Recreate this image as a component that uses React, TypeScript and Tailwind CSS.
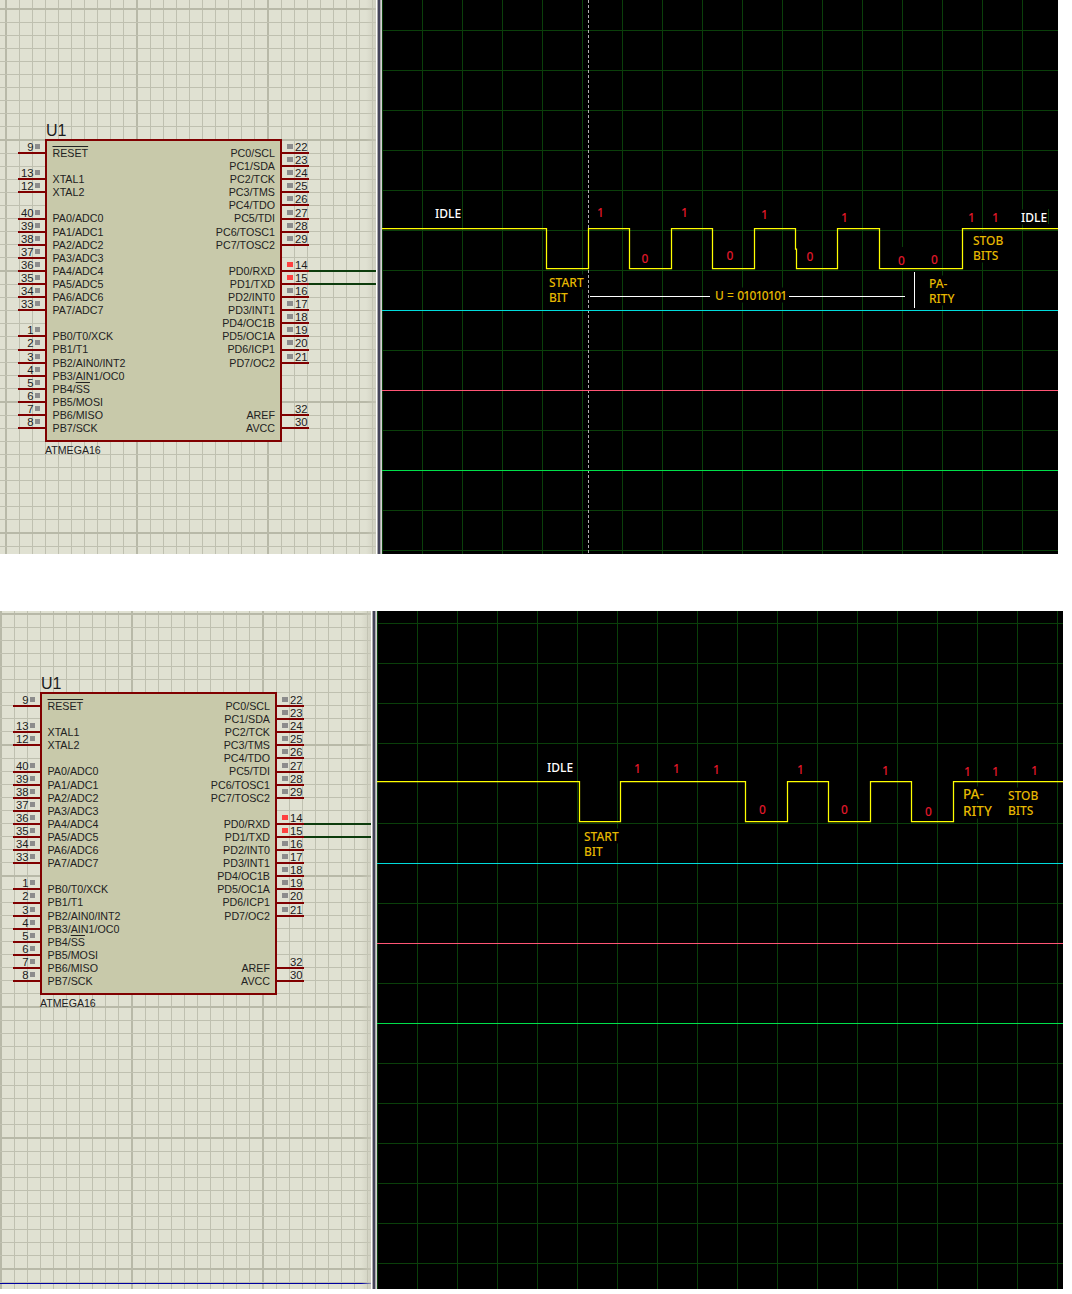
const PIN_ROWS = 22

// row index -> pin number / label on each side of the chip
const leftPins: Record<number, string> = {
  0: '9', 2: '13', 3: '12', 5: '40', 6: '39', 7: '38', 8: '37', 9: '36', 10: '35', 11: '34', 12: '33',
  14: '1', 15: '2', 16: '3', 17: '4', 18: '5', 19: '6', 20: '7', 21: '8',
}
const rightPins: Record<number, string> = {
  0: '22', 1: '23', 2: '24', 3: '25', 4: '26', 5: '27', 6: '28', 7: '29',
  9: '14', 10: '15', 11: '16', 12: '17', 13: '18', 14: '19', 15: '20', 16: '21',
  20: '32', 21: '30',
}
const leftLabels: Record<number, string> = {
  2: 'XTAL1', 3: 'XTAL2', 5: 'PA0/ADC0', 6: 'PA1/ADC1', 7: 'PA2/ADC2', 8: 'PA3/ADC3', 9: 'PA4/ADC4',
  10: 'PA5/ADC5', 11: 'PA6/ADC6', 12: 'PA7/ADC7', 14: 'PB0/T0/XCK', 15: 'PB1/T1', 16: 'PB2/AIN0/INT2',
  17: 'PB3/AIN1/OC0', 19: 'PB5/MOSI', 20: 'PB6/MISO', 21: 'PB7/SCK',
}
const rightLabels: Record<number, string> = {
  0: 'PC0/SCL', 1: 'PC1/SDA', 2: 'PC2/TCK', 3: 'PC3/TMS', 4: 'PC4/TDO', 5: 'PC5/TDI', 6: 'PC6/TOSC1', 7: 'PC7/TOSC2',
  9: 'PD0/RXD', 10: 'PD1/TXD', 11: 'PD2/INT0', 12: 'PD3/INT1', 13: 'PD4/OC1B', 14: 'PD5/OC1A', 15: 'PD6/ICP1', 16: 'PD7/OC2',
  20: 'AREF', 21: 'AVCC',
}

const rows = Array.from({ length: PIN_ROWS }, (_, i) => i)

function LeftPinColumn() {
  return (
    <div className="w-[27px] mt-[2px] flex flex-col">
      {rows.map((i) =>
        leftPins[i] ? (
          <div key={i} className="h-[13.1px] border-b-2 border-[#800000] flex items-center justify-end pr-[5px] gap-[1.5px] text-[11.3px] leading-[11px] text-[#1c1c1c]">
            <span className="mt-[2px]">{leftPins[i]}</span>
            <span className="w-[5px] h-[5px] bg-[#8c8c8c]" />
          </div>
        ) : (
          <div key={i} className="h-[13.1px]" />
        ),
      )}
    </div>
  )
}

function RightPinColumn() {
  return (
    <div className="w-[27px] mt-[2px] flex flex-col">
      {rows.map((i) =>
        rightPins[i] ? (
          <div key={i} className="relative h-[13.1px] border-b-2 border-[#800000] flex items-center pl-[5px] gap-[2px] text-[11.3px] leading-[11px] text-[#1c1c1c]">
            <span
              className={
                i === 9 || i === 10
                  ? 'w-[6px] h-[5px] bg-[#ff4040]'
                  : i >= 20
                    ? 'w-[6px] h-[5px]'
                    : 'w-[6px] h-[5px] bg-[#8c8c8c]'
              }
            />
            <span className="mt-[2px]">{rightPins[i]}</span>
            {(i === 9 || i === 10) && (
              <span className="absolute left-full bottom-[-2px] w-[68px] h-[2px] bg-[#0c3c0c]" />
            )}
          </div>
        ) : (
          <div key={i} className="h-[13.1px]" />
        ),
      )}
    </div>
  )
}

function Chip({ left, top }: { left: number; top: number }) {
  return (
    <div className="absolute" style={{ left, top }}>
      <div className="absolute left-[28px] top-[-17px] text-[16px] leading-[18px] text-[#1c1c1c]">U1</div>
      <div className="flex items-start">
        <LeftPinColumn />
        <div className="w-[237px] h-[303px] border-2 border-[#800000] bg-[#c8c9aa] flex justify-between pl-[5.5px] pr-[5px] pt-[6px] text-[10.7px] text-[#222]">
          <div className="flex flex-col">
            {rows.map((i) => (
              <div key={i} className="h-[13.1px] leading-[13.1px] whitespace-nowrap">
                {i === 0 ? (
                  <span className="overline">RESET</span>
                ) : i === 18 ? (
                  <>
                    PB4/<span className="overline">SS</span>
                  </>
                ) : (
                  leftLabels[i]
                )}
              </div>
            ))}
          </div>
          <div className="flex flex-col items-end">
            {rows.map((i) => (
              <div key={i} className="h-[13.1px] leading-[13.1px] whitespace-nowrap">
                {rightLabels[i]}
              </div>
            ))}
          </div>
        </div>
        <RightPinColumn />
      </div>
      <div className="absolute left-[27px] top-[305px] text-[10.6px] leading-[13px] text-[#222]">ATMEGA16</div>
    </div>
  )
}

type SchematicProps = {
  width: number
  height: number
  gridX: number
  gridY: number
  chipLeft: number
  chipTop: number
  blueLine?: number
}

function Schematic({ width, height, gridX, gridY, chipLeft, chipTop, blueLine }: SchematicProps) {
  const vLines = Array.from({ length: 40 }, (_, i) => i)
  const hLines = Array.from({ length: 60 }, (_, i) => i)
  return (
    <div className="relative shrink-0 overflow-hidden bg-[#e0e1d2]" style={{ width, height }}>
      <svg className="absolute inset-0" width={width} height={height} shapeRendering="crispEdges">
        {vLines.map((i) => {
          const x = gridX + i * 13.1
          return <line key={i} x1={x} x2={x} y1={0} y2={height} stroke={i % 10 === 0 ? '#b8b9a8' : '#bfc0b0'} strokeWidth={i % 10 === 0 ? 2 : 1} />
        })}
        {hLines.map((i) => {
          const y = gridY + i * 13.1
          return <line key={i} x1={0} x2={width} y1={y} y2={y} stroke={i % 10 === 0 ? '#b8b9a8' : '#bfc0b0'} strokeWidth={i % 10 === 0 ? 2 : 1} />
        })}
        {blueLine !== undefined && <line x1={0} x2={width} y1={blueLine} y2={blueLine} stroke="#0000a0" strokeWidth={1} />}
      </svg>
      <div className="absolute right-0 top-0 bottom-0 w-[10px] bg-gradient-to-r from-transparent to-[#c8c8b8]/70" />
      <Chip left={chipLeft} top={chipTop} />
    </div>
  )
}

function Divider() {
  return (
    <div className="w-[6px] shrink-0 self-stretch flex">
      <div className="w-px bg-white" />
      <div className="w-px bg-[#a8a8a8]" />
      <div className="w-[2px] bg-[#44445a]" />
      <div className="w-px bg-[#a8a8a8]" />
      <div className="w-px bg-[#d4d4d4]" />
    </div>
  )
}

type Tone = 'white' | 'gold' | 'goldTight' | 'goldLarge' | 'red'
type Word = { text: string; x: number; cy: number; tone: Tone }

const tones: Record<Tone, string> = {
  white: 'text-[12px] font-medium text-white bg-black',
  gold: 'text-[12px] font-medium text-[#e6b800] bg-black',
  goldTight: 'text-[12px] font-medium tracking-[-0.7px] [word-spacing:1.5px] text-[#e6b800] bg-black',
  goldLarge: 'text-[13.5px] font-medium text-[#e6b800] bg-black',
  red: 'text-[12px] font-medium text-[#e0182a] -translate-x-1/2',
}

function ScopeText({ word, x0, y0 }: { word: Word; x0: number; y0: number }) {
  return (
    <span
      className={`absolute -translate-y-1/2 whitespace-nowrap leading-[15px] font-['Noto_Sans',sans-serif] ${tones[word.tone]}`}
      style={{ left: word.x - x0, top: word.cy - y0 }}
    >
      {word.text}
    </span>
  )
}

const red = (x: number, cy: number, text: string): Word => ({ text, x, cy, tone: 'red' })
const gold = (x: number, cy: number, text: string, tone: Tone = 'gold'): Word => ({ text, x, cy, tone })
const white = (x: number, cy: number, text: string): Word => ({ text, x, cy, tone: 'white' })

const topWords: Word[] = [
  white(435, 213, 'IDLE'), white(1021, 217, 'IDLE'),
  red(600.5, 212, '1'), red(645, 258, '0'), red(684.5, 212, '1'), red(730, 255, '0'), red(764.5, 214, '1'),
  red(810, 256, '0'), red(844.5, 217, '1'), red(901.5, 260, '0'), red(934.5, 259, '0'), red(971.5, 217, '1'), red(995.5, 217, '1'),
  gold(973, 239.5, 'STOB'), gold(973, 254.5, 'BITS'), gold(549, 281.5, 'START'), gold(549, 296.5, 'BIT'),
  gold(715, 295, 'U = 01010101', 'goldTight'), gold(929, 282.5, 'PA-'), gold(929, 297.5, 'RITY'),
]

const bottomWords: Word[] = [
  white(547, 767, 'IDLE'),
  red(637.5, 768, '1'), red(676.5, 768, '1'), red(716.5, 769, '1'), red(762.5, 809, '0'), red(800.5, 769, '1'),
  red(844.5, 809, '0'), red(885.5, 770, '1'), red(928.5, 811, '0'), red(967.5, 771, '1'), red(995.5, 771, '1'), red(1034.5, 770, '1'),
  gold(963, 793.5, 'PA-', 'goldLarge'), gold(963, 810.5, 'RITY', 'goldLarge'), gold(1008, 794.5, 'STOB'), gold(1008, 809.5, 'BITS'),
  gold(584, 835.5, 'START'), gold(584, 850.5, 'BIT'),
]

type ScopeProps = {
  x0: number
  y0: number
  width: number
  height: number
  gridYs: number[]
  wave: string
  traces: number[]
  words: Word[]
  children?: React.ReactNode
}

function Scope({ x0, y0, width, height, gridYs, wave, traces, words, children }: ScopeProps) {
  const gridXs = Array.from({ length: 18 }, (_, i) => x0 + i * 40 + 0.5).filter((x) => x < x0 + width)
  const traceColors = ['#00dcdc', '#ff5575', '#00e04a']
  return (
    <div className="relative shrink-0 overflow-hidden bg-black" style={{ width, height }}>
      <svg className="absolute inset-0" width={width} height={height} viewBox={`${x0} ${y0} ${width} ${height}`}>
        {gridXs.map((x) => (
          <line key={x} x1={x} x2={x} y1={y0} y2={y0 + height} stroke="#0a3f0a" />
        ))}
        {gridYs.map((y) => (
          <line key={y} x1={x0} x2={x0 + width} y1={y + 0.5} y2={y + 0.5} stroke="#0a3f0a" />
        ))}
        {children}
        {traces.map((y, i) => (
          <line key={y} x1={x0} x2={x0 + width} y1={y + 0.5} y2={y + 0.5} stroke={traceColors[i]} />
        ))}
        <path d={wave} fill="none" stroke="#ffff00" strokeWidth={1.25} />
      </svg>
      {words.map((w) => (
        <ScopeText key={`${w.text}-${w.x}-${w.cy}`} word={w} x0={x0} y0={y0} />
      ))}
    </div>
  )
}

const topWave =
  'M382 228.5H546.5V268.5H588.5V228.5H629.5V268.5H671.5V228.5H712.5V268.5H754.5V228.5H795.5V249H796.5V268.5H837.5V228.5H879.5V268.5H962.5V228.5H1058'
const bottomWave =
  'M377 781.5H579.5V821.5H620.5V781.5H745.5V821.5H787.5V781.5H828.5V821.5H870.5V781.5H911.5V821.5H953.5V781.5H1063'

const topGrid = Array.from({ length: 14 }, (_, i) => 30 + i * 40)
const bottomGrid = Array.from({ length: 17 }, (_, i) => 623 + i * 40).filter((y) => y !== 783)

export default function App() {
  return (
    <div className="w-[1072px] h-[1294px] bg-white flex flex-col font-['Liberation_Sans',Arial,sans-serif]">
      <div className="flex h-[554px]">
        <Schematic width={376} height={554} gridX={6} gridY={9} chipLeft={18} chipTop={139} />
        <Divider />
        <Scope x0={382} y0={0} width={676} height={554} gridYs={topGrid} wave={topWave} traces={[310, 390, 470]} words={topWords}>
          <rect x={901} y={247} width={3} height={21} fill="#000" />
          <line x1={1048.5} x2={1048.5} y1={209} y2={224} stroke="#0a3f0a" />
          <line x1={590} x2={710} y1={296.5} y2={296.5} stroke="#fff" />
          <line x1={789} x2={905} y1={296.5} y2={296.5} stroke="#fff" />
          <line x1={914.5} x2={914.5} y1={272} y2={308} stroke="#fff" />
          <line x1={588.5} x2={588.5} y1={0} y2={554} stroke="#b0b0b0" strokeDasharray="3 2" />
        </Scope>
      </div>
      <div className="flex h-[678px] mt-[57px]">
        <Schematic width={371} height={678} gridX={1} gridY={3} chipLeft={13} chipTop={81} blueLine={672.5} />
        <Divider />
        <Scope x0={377} y0={611} width={686} height={678} gridYs={bottomGrid} wave={bottomWave} traces={[863, 943, 1023]} words={bottomWords} />
      </div>
    </div>
  )
}
